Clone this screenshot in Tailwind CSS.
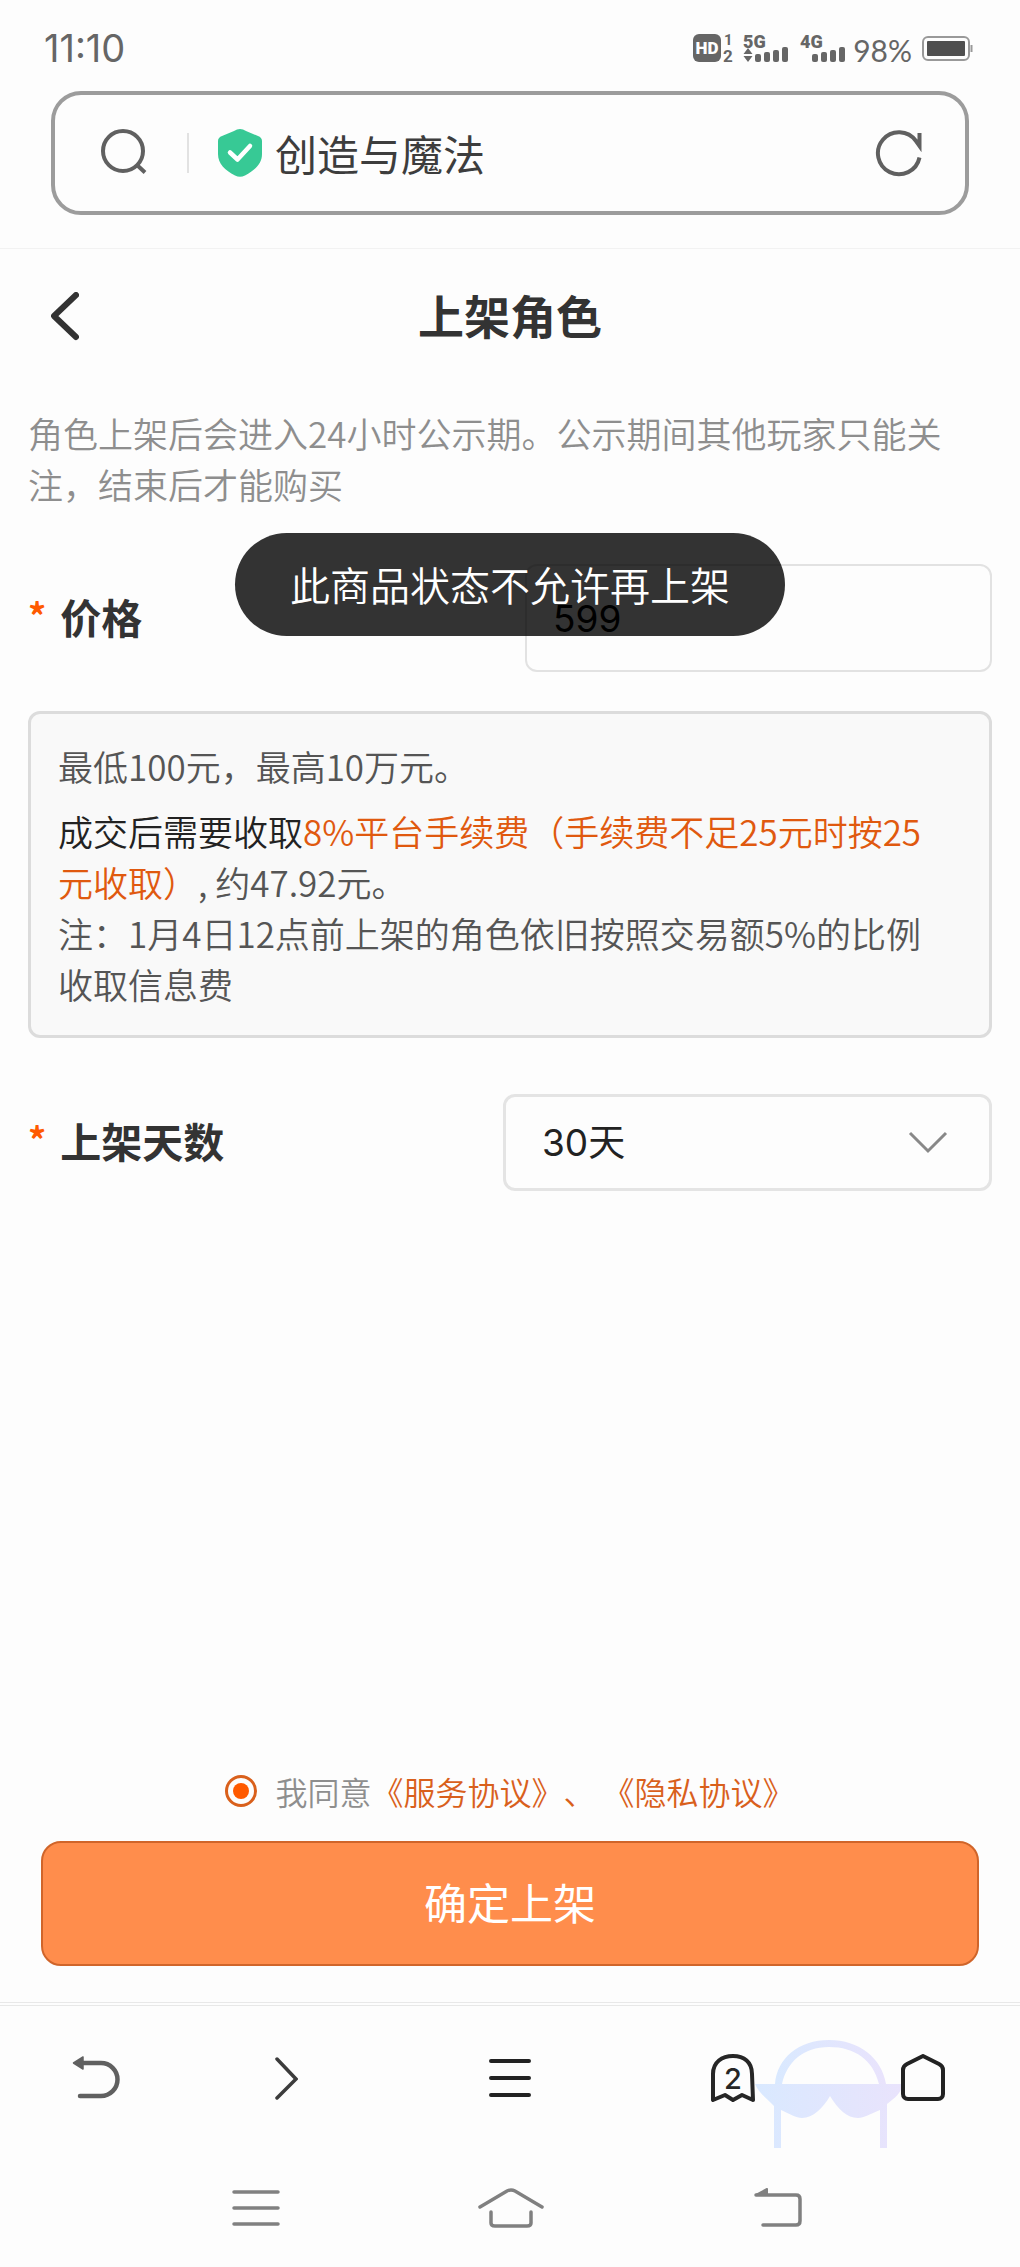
<!DOCTYPE html>
<html lang="zh-CN">
<head>
<meta charset="utf-8">
<meta name="viewport" content="width=device-width, initial-scale=1">
<title>上架角色</title>
<script src="https://cdn.jsdelivr.net/npm/@tailwindcss/browser@4"></script>
</head>
<body class="flex min-h-screen flex-col bg-[#fdfdfd] font-['Noto_Sans_CJK_SC',sans-serif] text-[#333] [text-spacing-trim:space-all]">

  <!-- Phone status bar -->
  <div class="flex h-[91px] items-center pt-1 pr-[46px] pl-11 text-[#666]">
    <span class="font-['Inter',sans-serif] text-[38px] leading-none">11:10</span>
    <div class="ml-auto flex items-center">
      <svg class="h-9 w-40" viewBox="0 0 160 36" fill="#666" font-family="Roboto, sans-serif" font-weight="700" aria-label="信号">
        <rect x="0" y="4" width="28" height="28" rx="6"/>
        <text x="14" y="24" font-size="17" font-weight="900" fill="#fff" text-anchor="middle">HD</text>
        <text x="31" y="15" font-size="15">1</text>
        <text x="30" y="32" font-size="17">2</text>
        <text x="50" y="18" font-size="18" font-weight="900">5G</text>
        <path d="M55 18l4.500 6h-9zM55 32l4.500-6h-9z"/>
        <rect x="62" y="24" width="6" height="8" rx="2"/><rect x="71" y="22" width="6" height="10" rx="2"/><rect x="80" y="20" width="6" height="12" rx="2"/><rect x="89" y="17" width="6" height="15" rx="2"/>
        <text x="107" y="18" font-size="18" font-weight="900">4G</text>
        <rect x="119" y="24" width="6" height="8" rx="2"/><rect x="128" y="22" width="6" height="10" rx="2"/><rect x="137" y="20" width="6" height="12" rx="2"/><rect x="146" y="17" width="6" height="15" rx="2"/>
      </svg>
      <span class="mt-1 mr-2.5 font-['Lato',sans-serif] text-[30px] leading-none">98%</span>
      <svg class="h-[26px] w-[52px]" viewBox="0 0 52 26" aria-label="电量">
        <rect x="1" y="2" width="46" height="23" rx="5" fill="none" stroke="#999" stroke-width="2"/>
        <rect x="5" y="6" width="38" height="15" rx="1" fill="#4f4f4f"/>
        <rect x="48.500" y="10" width="2" height="7" fill="#999"/>
      </svg>
    </div>
  </div>

  <!-- Browser address bar -->
  <div class="border-b border-[#f2f2f2] px-[51px] pb-[33px]">
    <div class="flex h-[124px] items-center rounded-[30px] border-4 border-[#9c9c9c] bg-[#fdfdfd] pr-[42px] pl-[45px]">
      <button type="button" aria-label="搜索">
        <svg class="size-12" viewBox="0 0 48 48" fill="none" stroke="#606060" stroke-width="4"><circle cx="23" cy="22" r="20"/><path d="M37 36l8 7.500"/></svg>
      </button>
      <span class="ml-[39px] h-10 w-0.5 bg-[#e2e2e2]"></span>
      <svg class="ml-7 h-12 w-[46px]" viewBox="0 0 46 48">
        <path d="M23 0c2 0 4 .8 6 2l12 5c2.500 1 4 2.500 4 5v13c0 10-7 16-17 21.500-3.500 1.700-6.500 1.700-10 0C8 41 1 35 1 25V12c0-2.500 1.500-4 4-5l12-5c2-1.200 4-2 6-2z" fill="#37c995"/>
        <path d="M13 23.500l7.500 7L33 17" fill="none" stroke="#fff" stroke-width="4.500" stroke-linecap="round" stroke-linejoin="round"/>
      </svg>
      <span class="ml-3 text-[42px] leading-none text-[#3d3d3d]">创造与魔法</span>
      <button type="button" class="ml-auto" aria-label="刷新">
        <svg class="size-12" viewBox="0 0 48 48" fill="none" stroke="#606060" stroke-width="4"><path d="M44.500 28.500A21 21 0 1 1 41 12l3.500 5V4"/></svg>
      </button>
    </div>
  </div>

  <header class="grid h-[136px] grid-cols-[1fr_auto_1fr] items-center px-[51px]">
    <button type="button" class="justify-self-start" aria-label="返回">
      <svg class="h-[50px] w-7" viewBox="0 0 28 50" fill="none" stroke="#333" stroke-width="6" stroke-linecap="round" stroke-linejoin="round"><path d="M25 3L3 24l22 21"/></svg>
    </button>
    <h1 class="pb-1.5 text-[46px] leading-none font-bold">上架角色</h1>
  </header>

  <main class="flex flex-1 flex-col px-7 pt-[22px]">
    <p class="text-[35px] leading-[51px] font-[350] text-[#8e8e8e]">角色上架后会进入24小时公示期。公示期间其他玩家只能关<br>注，结束后才能购买</p>

    <div class="relative mt-[55px] flex items-center justify-between">
      <label for="price" class="flex gap-3.5 pb-1 text-[41px] leading-none font-bold"><span class="text-[36px] leading-none text-[#ff5a00]">*</span>价格</label>
      <input id="price" type="text" inputmode="numeric" value="599" class="h-[108px] w-[467px] rounded-xl border-2 border-[#e2e2e2] bg-[#fdfdfd] px-[26px] font-['Inter',sans-serif] text-[37px] text-black">
      <div role="status" class="absolute -top-[31px] left-1/2 flex h-[103px] w-[550px] -translate-x-1/2 items-center justify-center rounded-full bg-black/80 pb-0.5 text-[40px] leading-none font-[350] text-white">此商品状态不允许再上架</div>
    </div>

    <section class="mt-[39px] rounded-xl border-[3px] border-[#dcdcdc] bg-[#f9f9f9] px-[27px] pt-[26px] pb-[26px] text-[35px] leading-[51px] font-[350] text-[#555]">
      <p>最低100元，最高10万元。</p>
      <p class="mt-[14px]"><span class="text-[#222]">成交后需要收取</span><span class="text-[#e0590f]">8%平台手续费（手续费不足25元时按25<br>元收取）</span>, 约47.92元。</p>
      <p>注：1月4日12点前上架的角色依旧按照交易额5%的比例<br>收取信息费</p>
    </section>

    <div class="mt-14 flex items-center justify-between">
      <label for="days" class="flex gap-3.5 pb-1 text-[41px] leading-none font-bold"><span class="text-[36px] leading-none text-[#ff5a00]">*</span>上架天数</label>
      <div class="relative w-[489px]">
        <select id="days" class="h-[97px] w-full appearance-none rounded-xl border-[3px] border-[#e4e4e4] bg-[#fdfdfd] px-9 font-['Inter','Noto_Sans_CJK_SC',sans-serif] text-[37px] text-[#222]">
          <option>30天</option>
        </select>
        <svg class="pointer-events-none absolute top-9 right-11 h-6 w-10" viewBox="0 0 40 24" fill="none" stroke="#888" stroke-width="3"><path d="M2 3l18 18L38 3"/></svg>
      </div>
    </div>

    <div class="mt-auto flex items-center justify-center pb-[21px] text-[32px] leading-[58px] font-[350] text-[#8e8e8e]">
      <input id="agree" type="radio" checked class="mr-[18px] size-8 appearance-none rounded-full border-[3px] border-[#d9601c] bg-clip-content p-[5px] checked:bg-[#ff5a00]">
      <label for="agree">我同意</label>
      <span class="text-[#d9601c]"><a href="#service">《服务协议》</a>、 <a href="#privacy">《隐私协议》</a></span>
    </div>
    <button type="button" class="mx-[13px] mb-9 h-[125px] rounded-[20px] border-2 border-[#d0652a] bg-[#ff8d4c] pb-1 text-[43px] leading-none text-white">确定上架</button>
  </main>

  <!-- Browser toolbar -->
  <nav class="relative grid h-[147px] grid-cols-[192fr_188fr_260fr_186fr_194fr] place-items-center border-t-4 border-double border-[#e8e8e8]">
    <button type="button" aria-label="后退">
      <svg class="size-12" viewBox="0 0 48 48" fill="none" stroke="#606060" stroke-width="4.500" stroke-linecap="round"><path d="M10 9h19a16.500 16.500 0 0 1 0 33H8"/><path d="M11 3v12L1.500 9z" fill="#606060" stroke-width="1.500" stroke-linejoin="round"/></svg>
    </button>
    <button type="button" aria-label="前进">
      <svg class="h-12 w-6" viewBox="0 0 24 48" fill="none" stroke="#3c3c3c" stroke-width="3.500" stroke-linecap="round"><path d="M3 5l19 20L3 44"/></svg>
    </button>
    <button type="button" aria-label="菜单">
      <svg class="h-12 w-[42px]" viewBox="0 0 42 48" fill="none" stroke="#222" stroke-width="4" stroke-linecap="round"><path d="M2 7h38M2 24h38M2 41h38"/></svg>
    </button>
    <svg class="pointer-events-none absolute top-[34px] left-[74%] h-[108px] w-[148px]" viewBox="0 0 148 108">
      <defs><linearGradient id="tint"><stop offset="0" stop-color="#d9e9ff"/><stop offset="1" stop-color="#e9e3fc"/></linearGradient></defs>
      <path d="M20 44C22 18 44 0 74 0s53 18 57 44h-7C118 20 100 7 74 7S32 22 27 44z" fill="url(#tint)"/>
      <path d="M0 44h148c-2 9-8 14-16 20v44h-7V70c-10 4-16 8-22 8-11 0-20-9-28-22-7 12-17 22-28 22-6 0-12-4-21-8v38h-7V66C11 58 4 53 0 44z" fill="url(#tint)"/>
    </svg>
    <button type="button" class="relative" aria-label="标签页">
      <svg class="h-12 w-11" viewBox="0 0 44 48" fill="none" stroke="#262626" stroke-width="4" stroke-linejoin="round"><path d="M2 46V20C2 8 11 2 22 2s19 6 19 18l1 26-11-5-9 5-8-5z"/><text x="22" y="35" font-family="Inter, sans-serif" font-size="29" font-weight="500" text-anchor="middle" fill="#262626" stroke="none">2</text></svg>
    </button>
    <button type="button" class="relative" aria-label="主页">
      <svg class="h-12 w-11" viewBox="0 0 44 48" fill="none" stroke="#222" stroke-width="4" stroke-linejoin="round"><path d="M22 2l16 8c3 1.500 4 3 4 6v24c0 3-2 5-5 5H7c-3 0-5-2-5-5V16c0-3 1-4.500 4-6z"/></svg>
    </button>
  </nav>

  <!-- System navigation -->
  <nav class="grid h-[118px] grid-cols-[256fr_254fr_280fr] place-items-center pr-[10%] pl-[12.5%]">
    <button type="button" aria-label="最近任务">
      <svg class="h-10 w-12" viewBox="0 0 48 40" fill="none" stroke="#808080" stroke-width="3.500" stroke-linecap="round"><path d="M2 4h44M2 20h44M2 36h44"/></svg>
    </button>
    <button type="button" aria-label="桌面">
      <svg class="h-10 w-[68px]" viewBox="0 0 68 40" fill="none" stroke="#808080" stroke-width="3.500" stroke-linecap="round"><path d="M3 19L30 3q4-2 8 0l27 16M14 24v11q0 3 4 3h32q4 0 4-3V24"/></svg>
    </button>
    <button type="button" aria-label="返回上级">
      <svg class="h-10 w-[50px]" viewBox="0 0 50 40" fill="none" stroke="#808080" stroke-width="3.500" stroke-linecap="round" stroke-linejoin="round"><path d="M3 7h40q4 0 4 4v22q0 4-4 4H10"/><path d="M3 7l11-6v6z" fill="#808080" stroke-width="2"/></svg>
    </button>
  </nav>
</body>
</html>
